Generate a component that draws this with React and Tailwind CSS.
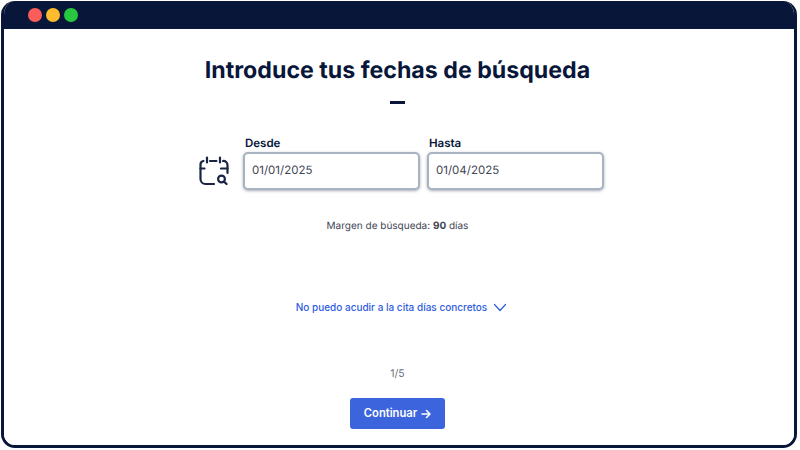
import React from "react";

function CalendarSearch() {
  return (
    <svg width="30" height="30" viewBox="0 0 30 30" fill="none" stroke="#1a2544" strokeWidth="2.2" strokeLinecap="round" strokeLinejoin="round" className="shrink-0">
      <path d="M8 1.5v5" />
      <path d="M21 1.5v5" />
      <path d="M11 5h6.5" />
      <path d="M4.5 5A3.5 3.5 0 0 0 1.5 8.5V23a5 5 0 0 0 5 5H15" />
      <path d="M24 5a4 4 0 0 1 4.5 4V17" />
      <path d="M1.5 12.5h4" />
      <path d="M22 12.5h6.5" />
      <circle cx="22.5" cy="23" r="3.4" />
      <path d="M25 25.6l2.6 2.4" />
    </svg>
  );
}

function DateField({ label, value }) {
  return (
    <div className="flex flex-col w-[177px]">
      <label className="text-[11.5px] leading-[15px] font-semibold text-[#071639] pl-[2px] mb-[1px]">{label}</label>
      <div className="h-[38px] flex items-center pl-[7px] bg-white rounded-[5px] border-2 border-[#a9b2c0] shadow-[0_1px_3px_rgba(60,70,90,0.45)] text-[11.5px] text-[#3f4654]">
        {value}
      </div>
    </div>
  );
}

export default function App() {
  return (
    <div className="w-[800px] h-[450px] bg-white pt-[1px] pb-[2px] pl-[1px] pr-[3px] font-['Inter',sans-serif] [text-rendering:geometricPrecision]">
      <div className="h-full flex flex-col rounded-[14px] border-[3px] border-t-0 border-[#071639] overflow-hidden">
        <div className="h-[28px] shrink-0 bg-[#071639] flex items-center gap-[4px] pl-[24px] pb-[1px]">
          <span className="w-[14px] h-[14px] rounded-full bg-[#fb5d5b]" />
          <span className="w-[14px] h-[14px] rounded-full bg-[#fdbb2d]" />
          <span className="w-[14px] h-[14px] rounded-full bg-[#27c840]" />
        </div>
        <div className="flex-1 flex flex-col items-center bg-white pr-[3px]">
          <h1 className="mt-[26px] text-[23.2px] leading-[30px] font-bold text-[#071639]">
            Introduce tus fechas de búsqueda
          </h1>
          <div className="mt-[16px] w-[15px] h-[3px] bg-[#071639]" />
          <div className="mt-[32px] flex items-end gap-[7px] ml-[8px]">
            <div className="mr-[7px] mb-[4px]"><CalendarSearch /></div>
            <DateField label="Desde" value="01/01/2025" />
            <DateField label="Hasta" value="01/04/2025" />
          </div>
          <p className="mt-[29px] text-[10px] leading-[14px] text-[#3f4654]">
            Margen de búsqueda: <span className="font-bold">90</span> días
          </p>
          <button className="mt-[67px] ml-[8px] flex items-center gap-[6px] text-[#2f5ce0] text-[10px] leading-[14px] font-medium">
            No puedo acudir a la cita días concretos
            <svg width="14" height="9" viewBox="0 0 14 9" fill="none" stroke="#2f5ce0" strokeWidth="1.2" strokeLinecap="round" strokeLinejoin="round">
              <path d="M1.5 1.5L7 7.5l5.5-6" />
            </svg>
          </button>
          <p className="mt-[53px] text-[10.5px] leading-[14px] text-[#6b7280]">1/5</p>
          <button className="mt-[17px] w-[95px] h-[31px] rounded-[3px] bg-[#3c65dd] text-white text-[11.2px] font-semibold flex items-center justify-center gap-[4px]">
            Continuar
            <svg width="10" height="10" viewBox="0 0 10 10" fill="none" stroke="white" strokeWidth="1.5" strokeLinecap="round" strokeLinejoin="round">
              <path d="M1 5h8M5.5 1.5L9 5 5.5 8.5" />
            </svg>
          </button>
        </div>
      </div>
    </div>
  );
}
